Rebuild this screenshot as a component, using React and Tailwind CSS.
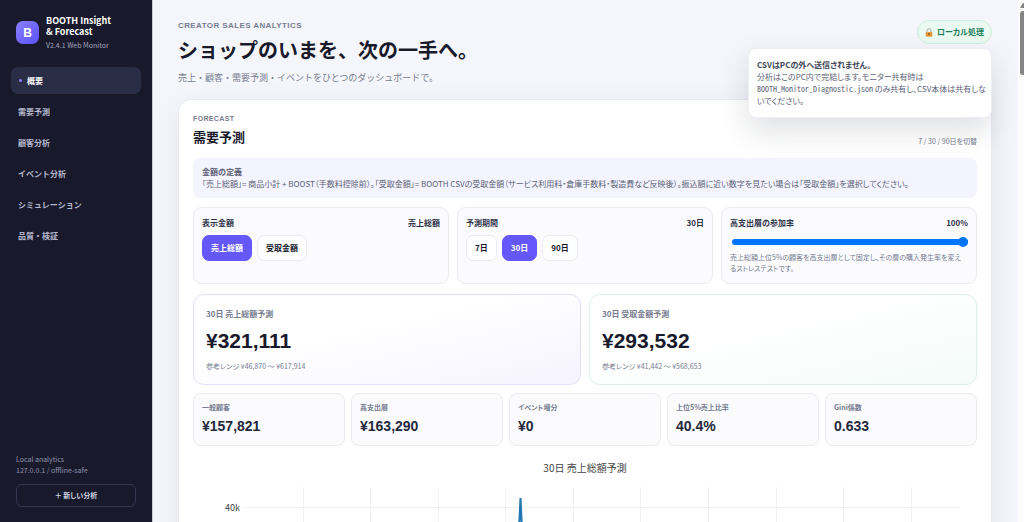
import React, { useState } from "react";

const navItems = [
  "概要",
  "需要予測",
  "顧客分析",
  "イベント分析",
  "シミュレーション",
  "品質・検証",
];

const metrics = [
  { label: "一般顧客", value: "¥157,821" },
  { label: "高支出層", value: "¥163,290" },
  { label: "イベント増分", value: "¥0" },
  { label: "上位5%売上比率", value: "40.4%" },
  { label: "Gini係数", value: "0.633" },
];

const gridX = [111, 178, 246, 313, 381, 448, 516, 584, 651, 719];

const Sidebar = () => {
  const [active, setActive] = useState("概要");

  return (
    <aside className="flex w-[153px] shrink-0 flex-col border-r border-[#c9cad3] bg-[#181a2b] px-[11px] pt-[15px] pb-[15px]">
      <div className="flex items-center gap-[7px] pl-[5px]">
        <div className="flex size-[23px] shrink-0 items-center justify-center rounded-[7px] bg-linear-to-br from-[#8b7fff] to-[#5b50f6] font-['Liberation_Sans',sans-serif] text-[12px] font-bold text-white">
          B
        </div>
        <div>
          <p className="text-[9px] leading-[11px] font-bold whitespace-nowrap text-white">
            BOOTH Insight
            <br />& Forecast
          </p>
          <p className="mt-[3px] text-[7px] leading-[10px] text-[#a2a5bb]">
            V2.4.1 Web Monitor
          </p>
        </div>
      </div>

      <nav className="mt-[17px] flex flex-col gap-[4px] [font-feature-settings:normal]">
        {navItems.map((item) => (
          <a
            key={item}
            href="#"
            onClick={() => setActive(item)}
            className={`flex h-[27px] items-center gap-[5px] rounded-[7px] px-[7px] text-[8px] font-bold ${
              item === active ? "bg-[#2a2d46] text-white" : "text-[#b4b7cb]"
            }`}
          >
            {item === active && (
              <span className="ml-px size-[3px] rounded-full bg-[#8b7fff]" />
            )}
            {item}
          </a>
        ))}
      </nav>

      <div className="mt-auto px-[5px]">
        <p className="text-[7px] leading-[11px] text-[#9093ab]">
          Local analytics
          <br />
          127.0.0.1 / offline-safe
        </p>
        <button className="mt-[8px] h-[23px] w-full rounded-[6px] border border-[#35384f] text-[7px] font-bold text-[#d3d5e3]">
          ＋ 新しい分析
        </button>
      </div>
    </aside>
  );
};

const LockIcon = () => (
  <svg viewBox="0 0 16 18" className="h-[9px] w-[8px]">
    <path
      d="M4 9V5.5a4 4 0 0 1 8 0V9"
      fill="none"
      stroke="#a9a6a4"
      strokeWidth="2"
    />
    <rect x="1.5" y="8" width="13" height="9.5" rx="1.5" fill="#f0a03c" />
    <path d="M1.5 11h13M1.5 14h13" stroke="#d9822b" strokeWidth="1" />
    <path d="M8 10.5v4" stroke="#5c3a1e" strokeWidth="2" />
  </svg>
);

const Header = () => (
  <header className="flex items-start justify-between">
    <div>
      <p className="font-['Liberation_Sans',sans-serif] text-[8px] leading-[11px] font-bold tracking-wider text-[#777c90]">
        CREATOR SALES ANALYTICS
      </p>
      <h1 className="mt-[5px] text-[20px] leading-[28px] font-bold text-[#181a2b] [font-feature-settings:normal]">
        ショップのいまを、次の一手へ。
      </h1>
      <p className="mt-[7px] text-[9px] leading-[14px] text-[#777c90] [font-feature-settings:normal]">
        売上・顧客・需要予測・イベントをひとつのダッシュボードで。
      </p>
    </div>
    <div className="relative">
      <button className="flex h-[24px] items-center gap-[4px] rounded-full border border-[#cdeedd] bg-[#eafaf3] px-[7px] text-[8px] font-bold text-[#1e7d5c]">
        <LockIcon />
        ローカル処理
      </button>
      <div className="absolute top-full right-0 z-10 mt-[4px] w-[244px] rounded-[8px] border border-[#edeef4] bg-white py-[10px] pr-[4px] pl-[8px] text-[8px] leading-[12px] text-[#5c6175] shadow-[0_12px_30px_rgba(24,26,43,0.14)]">
        <strong className="block text-[#43475a]">
          CSVはPCの外へ送信されません。
        </strong>
        <p>分析はこのPC内で完結します。モニター共有時は</p>
        <p>
          <code className="font-['Noto_Sans_CJK_JP',monospace] text-[8px] [font-feature-settings:'hwid']">
            BOOTH_Monitor_Diagnostic.json
          </code>{" "}
          のみ共有し、CSV本体は共有しないでください。
        </p>
      </div>
    </div>
  </header>
);

const ControlCard = ({ label, value, htmlFor, children }) => (
  <div className="h-[77px] rounded-[9px] border border-[#e9eaf2] bg-[#fbfbfe] px-[8px] pt-[8px]">
    <div className="flex items-center justify-between text-[8px] leading-[13px] font-bold text-[#30344a] [font-feature-settings:normal]">
      <label htmlFor={htmlFor}>{label}</label>
      <span>{value}</span>
    </div>
    {children}
  </div>
);

const Segment = ({ options, value, onChange }) => (
  <div className="mt-[6px] flex gap-[5px]">
    {options.map((option) => (
      <button
        key={option}
        onClick={() => onChange(option)}
        className={`h-[26px] rounded-[7px] border px-[8px] text-[8px] font-bold ${
          option === value
            ? "border-[#6558fb] bg-[#6558fb] text-white"
            : "border-[#e9eaf2] bg-white text-[#181a2b]"
        }`}
      >
        {option}
      </button>
    ))}
  </div>
);

const Controls = () => {
  const [amount, setAmount] = useState("売上総額");
  const [period, setPeriod] = useState("30日");
  const [rate, setRate] = useState(100);

  return (
    <div className="mt-[9px] grid grid-cols-3 gap-[8px]">
      <ControlCard label="表示金額" value={amount}>
        <Segment
          options={["売上総額", "受取金額"]}
          value={amount}
          onChange={setAmount}
        />
      </ControlCard>
      <ControlCard label="予測期間" value={period}>
        <Segment
          options={["7日", "30日", "90日"]}
          value={period}
          onChange={setPeriod}
        />
      </ControlCard>
      <ControlCard label="高支出層の参加率" value={`${rate}%`} htmlFor="rate">
        <div className="mt-[7px] flex h-[11px] items-center pl-[2px]">
          <input
            id="rate"
            type="range"
            min="0"
            max="100"
            value={rate}
            onChange={(e) => setRate(Number(e.target.value))}
            className="h-[6px] w-full appearance-none rounded-full bg-[#0075ff] [&::-webkit-slider-thumb]:size-[10px] [&::-webkit-slider-thumb]:appearance-none [&::-webkit-slider-thumb]:rounded-full [&::-webkit-slider-thumb]:bg-[#0075ff]"
          />
        </div>
        <p className="mt-[5px] pr-[3px] text-[7px] leading-[11px] text-[#777c90]">
          売上総額上位5%の顧客を高支出層として固定し、その層の購入発生率を変えるストレステストです。
        </p>
      </ControlCard>
    </div>
  );
};

const ForecastCard = ({ title, value, range, className }) => (
  <div
    className={`h-[91px] rounded-[11px] border bg-linear-to-br from-white from-40% px-[12px] pt-[12px] ${className}`}
  >
    <p className="text-[8px] leading-[13px] font-bold text-[#777c90]">
      {title}
    </p>
    <p className="mt-[7px] font-['Liberation_Sans',sans-serif] text-[21px] leading-[28px] font-bold text-[#181a2b]">
      {value}
    </p>
    <p className="mt-[6px] text-[7px] leading-[11px] text-[#777c90]">{range}</p>
  </div>
);

const Chart = () => (
  <div className="mt-[13px]">
    <h3 className="text-center text-[10px] leading-[18px] text-[#444444]">
      30日 売上総額予測
    </h3>
    <svg viewBox="0 0 784 200" className="mt-[10px] block w-full">
      <g stroke="#eef2f5">
        {gridX.map((x) => (
          <line key={x} x1={x - 0.5} x2={x - 0.5} y1="0" y2="180" />
        ))}
        <line x1="49" x2="767" y1="20.5" y2="20.5" />
      </g>
      <text x="47" y="24" textAnchor="end" fontSize="9" fill="#444444">
        40k
      </text>
      <path
        d="M49 170L320 170L327.5 11L335 170L767 170"
        fill="none"
        stroke="#1f77b4"
        strokeWidth="2"
      />
    </svg>
  </div>
);

const App = () => {
  return (
    <div className="flex h-screen overflow-hidden bg-[#f5f6fb] font-['Noto_Sans_CJK_JP',sans-serif] [font-feature-settings:'palt']">
      <Sidebar />

      <main className="min-w-0 flex-1 overflow-hidden pt-[20px] pr-[26px] pl-[25px]">
        <Header />

        <section className="mt-[14px] rounded-[13px] border border-[#eaebf2] bg-white px-[14px] pt-[13px] pb-[14px] shadow-[0_8px_30px_rgba(24,26,43,0.07)]">
          <div className="flex items-end justify-between">
            <div>
              <p className="font-['Liberation_Sans',sans-serif] text-[7px] leading-[11px] font-bold tracking-wider text-[#777c90]">
                FORECAST
              </p>
              <h2 className="mt-[4px] text-[13px] leading-[18px] font-bold text-[#181a2b]">
                需要予測
              </h2>
            </div>
            <p className="text-[7px] leading-[9px] text-[#777c90]">
              7 / 30 / 90日を切替
            </p>
          </div>

          <div className="mt-[12px] rounded-[7px] bg-[#f4f4ff] px-[9px] py-[8px] text-[8px] leading-[12px] text-[#5c6175]">
            <strong className="block">金額の定義</strong>
            「売上総額」= 商品小計 + BOOST（手数料控除前）。「受取金額」= BOOTH
            CSVの受取金額（サービス利用料・倉庫手数料・製造費など反映後）。振込額に近い数字を見たい場合は「受取金額」を選択してください。
          </div>

          <Controls />

          <div className="mt-[10px] grid grid-cols-2 gap-[8px]">
            <ForecastCard
              title="30日 売上総額予測"
              value="¥321,111"
              range="参考レンジ ¥46,870 〜 ¥617,914"
              className="border-[#e2dff8] to-[#f5f3ff]"
            />
            <ForecastCard
              title="30日 受取金額予測"
              value="¥293,532"
              range="参考レンジ ¥41,442 〜 ¥568,653"
              className="border-[#dcefe8] to-[#f3fbf8]"
            />
          </div>

          <div className="mt-[8px] grid grid-cols-5 gap-[6px]">
            {metrics.map((metric) => (
              <div
                key={metric.label}
                className="h-[53px] rounded-[8px] border border-[#e9eaf2] bg-[#fbfbfe] px-[8px] pt-[8px]"
              >
                <p className="text-[7px] leading-[11px] font-bold text-[#777c90]">
                  {metric.label}
                </p>
                <p className="mt-[3px] font-['Liberation_Sans',sans-serif] text-[14px] leading-[20px] font-bold text-[#24283b]">
                  {metric.value}
                </p>
              </div>
            ))}
          </div>

          <Chart />
        </section>
      </main>

      <div className="flex w-[6px] shrink-0 flex-col items-end bg-[#fcfcfc] pt-[3px]">
        <svg viewBox="0 0 4 5" className="h-[5px] w-[4px]">
          <path d="M0 5L3 0H4V5Z" fill="#858585" />
        </svg>
        <div className="mt-[3px] h-[64px] w-[4px] rounded-l-[3px] bg-[#858585]" />
      </div>
    </div>
  );
};

export default App;
